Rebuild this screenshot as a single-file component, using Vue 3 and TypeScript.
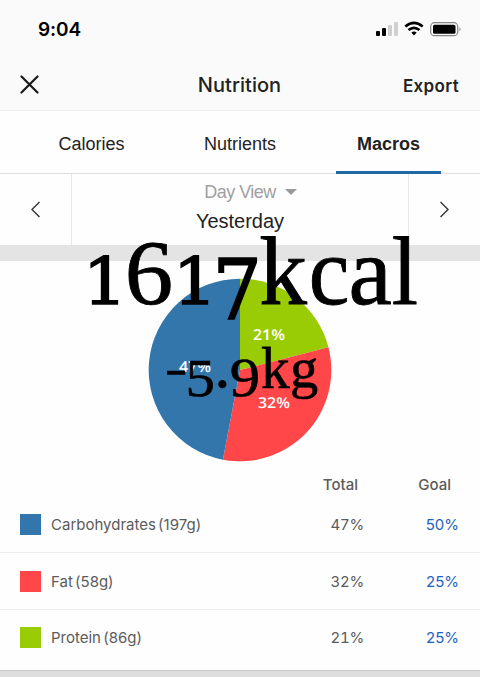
<script setup lang="ts">
interface Macro { name: string; grams: number; total: number; goal: number; color: string }
interface Glyph { ch: string; box: [number, number, number, number]; ink: [number, number, number, number]; slab?: boolean }

const tabs = ['Calories', 'Nutrients', 'Macros']
const active = 'Macros'
const macros: Macro[] = [
  { name: 'Carbohydrates', grams: 197, total: 47, goal: 50, color: '#3276ab' },
  { name: 'Fat', grams: 58, total: 32, goal: 25, color: '#ff4649' },
  { name: 'Protein', grams: 86, total: 21, goal: 25, color: '#9acc05' },
]

// Glyph ink extents (x0, x1, bottom, top) in 1/1000 em, fitted to a box on the page (x0, x1, top, bottom).
const caption: Glyph[] = [
  { ch: '1', box: [92, 121, 256, 303.5], ink: [134, 544, 0, 729], slab: true },
  { ch: '6', box: [128, 170, 241, 305.5], ink: [34, 468, -14, 684] },
  { ch: '1', box: [182, 211, 256, 303.5], ink: [134, 544, 0, 729], slab: true },
  { ch: '7', box: [217, 258, 258, 319], ink: [57, 585, 0, 729], slab: true },
  { ch: 'k', box: [260, 307.5, 237, 303.5], ink: [7, 505, 0, 683] },
  { ch: 'c', box: [311, 346.5, 259, 305], ink: [25, 412, -10, 460] },
  { ch: 'a', box: [352, 391.5, 259, 305], ink: [37, 442, -10, 460] },
  { ch: 'l', box: [393.5, 416, 237, 303.5], ink: [19, 257, 0, 683] },
]
const change: Glyph[] = [
  { ch: '-', box: [167.5, 184, 372, 375], ink: [39, 285, 194, 257] },
  { ch: '5', box: [187.5, 211.5, 359.5, 397], ink: [32, 438, -14, 688] },
  { ch: '.', box: [219, 226, 381, 388], ink: [70, 181, -11, 100] },
  { ch: '9', box: [231.5, 257.5, 358.5, 397], ink: [30, 459, -22, 676] },
  { ch: 'k', box: [261.5, 290, 347.5, 388], ink: [7, 505, 0, 683] },
  { ch: 'g', box: [291.5, 316.5, 361.5, 399.5], ink: [28, 470, -218, 460] },
]
function place(g: Glyph): string {
  const [x0, x1, top, bottom] = g.box
  const [i0, i1, low, high] = g.ink
  const sx = (x1 - x0) / ((i1 - i0) / 10)
  const sy = (bottom - top) / ((high - low) / 10)
  return `translate(${x0 - (i0 / 10) * sx} ${bottom + (low / 10) * sy}) scale(${sx} ${sy})`
}

const R = 91.3
function point(share: number): string {
  const a = share * Math.PI * 2
  return `${92 + R * Math.sin(a)} ${92 - R * Math.cos(a)}`
}
function slice(from: number, to: number): string {
  return `M92 92L${point(from)}A${R} ${R} 0 0 1 ${point(to)}Z`
}
const slices = [
  { d: slice(0, 0.21), color: '#9acc05' },
  { d: slice(0.21, 0.53), color: '#ff4649' },
  { d: slice(0.53, 1), color: '#3276ab' },
]
</script>

<template>
  <main class="screen">
    <header class="top">
      <div class="status">
        <span class="time">9:04</span>
        <svg class="status-icons" width="88" height="18" viewBox="0 0 88 18">
          <rect x="1" y="11" width="4" height="5" rx="1" />
          <rect x="7" y="8" width="4" height="8" rx="1" />
          <g fill="#d0d0d0"><rect x="13" y="5" width="4" height="11" rx="1" /><rect x="19" y="2" width="4" height="14" rx="1" /></g>
          <g fill="none" stroke="#000" stroke-width="2.6">
            <path d="M30.3 6.6Q39 -.9 47.7 6.6" /><path d="M33.5 10.1Q39 5.5 44.5 10.1" />
          </g>
          <path d="M36.3 12.6Q39 10.4 41.7 12.6L39 15.6Z" />
          <rect x="55.7" y="2.7" width="27" height="13" rx="3.8" fill="none" stroke="#858585" stroke-width="1.2" />
          <rect x="58" y="4.8" width="22.5" height="9" rx="1.6" />
          <path d="M84.5 7q2 2.2 0 4.4z" fill="#777" />
        </svg>
      </div>
      <div class="nav">
        <svg class="close" width="19" height="19" viewBox="0 0 19 19"><path d="M1.5 1.5L17.5 17.5M17.5 1.5L1.5 17.5" /></svg>
        <h1>Nutrition</h1>
        <span class="export">Export</span>
      </div>
    </header>

    <nav class="tabs">
      <span v-for="t in tabs" :key="t" class="tab" :class="{ active: t === active }">{{ t }}</span>
    </nav>

    <section class="dates">
      <div class="arrow"><svg width="10" height="17" viewBox="0 0 10 17"><path d="M8.5 1L1 8.5L8.5 16" /></svg></div>
      <div class="period">
        <div class="view">Day View <i class="caret"></i></div>
        <div class="day">Yesterday</div>
      </div>
      <div class="arrow"><svg width="10" height="17" viewBox="0 0 10 17"><path d="M.5 1L8 8.500L.5 16" /></svg></div>
    </section>

    <div class="band"></div>

    <section class="chart">
      <svg width="184" height="184" viewBox="0 0 184 184">
        <path v-for="s in slices" :key="s.color" :d="s.d" :fill="s.color" />
        <g class="share">
          <text x="105" y="62" textLength="32" lengthAdjust="spacingAndGlyphs">21%</text>
          <text x="110" y="129.5" textLength="32" lengthAdjust="spacingAndGlyphs">32%</text>
          <text x="31" y="94" textLength="32" lengthAdjust="spacingAndGlyphs">47%</text>
        </g>
      </svg>
    </section>

    <section class="table">
      <div class="row head"><span class="name"></span><span class="total">Total</span><span class="goal">Goal</span></div>
      <div v-for="m in macros" :key="m.name" class="row">
        <i class="swatch" :style="{ background: m.color }"></i>
        <span class="name">{{ m.name }} ({{ m.grams }}g)</span>
        <span class="total">{{ m.total }}%</span>
        <span class="goal">{{ m.goal }}%</span>
      </div>
    </section>
    <div class="foot"></div>

    <svg class="overlay" width="480" height="677" viewBox="0 0 480 677">
      <g class="caption">
        <text v-for="(g, i) in caption" :key="i" :class="{ slab: g.slab }" :transform="place(g)">{{ g.ch }}</text>
      </g>
      <g class="change">
        <text v-for="(g, i) in change" :key="i" :transform="place(g)">{{ g.ch }}</text>
      </g>
    </svg>
  </main>
</template>

<style>
body { margin: 0; background: #fdfdfd; }
</style>

<style scoped>
.screen { position: relative; width: 480px; height: 677px; overflow: hidden; display: flex; flex-direction: column; background: #fefefe; font-family: Inter, "Liberation Sans", sans-serif; color: #222; }
.top { box-sizing: border-box; height: 111px; background: #fafafa; border-bottom: 1px solid #f0f0f0; flex: none; }
.status { display: flex; justify-content: space-between; align-items: center; height: 58px; padding: 0 17px 0 38px; }
.time { font-size: 19px; font-weight: 600; color: #000; letter-spacing: -.1px; }
.nav { display: grid; grid-template-columns: 1fr auto 1fr; align-items: center; height: 53px; padding: 0 21px 0 20px; }
.close path { fill: none; stroke: #181818; stroke-width: 2.2; stroke-linecap: round; }
h1 { margin: 0; font-size: 20px; font-weight: 500; letter-spacing: .05px; }
.export { justify-self: end; font-size: 17px; font-weight: 600; letter-spacing: .35px; padding-top: 2px; }
.tabs { box-sizing: border-box; height: 63px; flex: none; display: flex; justify-content: center; gap: 43.5px; border-bottom: 1px solid #ddd; font-family: "Liberation Sans", sans-serif; font-size: 18px; }
.tab { box-sizing: border-box; width: 105px; height: 63px; line-height: 66px; text-align: center; }
.tab.active { font-weight: 700; border-bottom: 3px solid #1e69a5; }
.dates { height: 71px; flex: none; display: flex; font-family: "Liberation Sans", sans-serif; }
.arrow { width: 71px; display: flex; align-items: center; justify-content: center; }
.arrow path { fill: none; stroke: #333; stroke-width: 1.4; }
.period { box-sizing: border-box; flex: 1; border-left: 1px solid #e8e8e8; border-right: 1px solid #e8e8e8; text-align: center; padding-top: 6px; }
.view { display: flex; justify-content: center; align-items: center; gap: 9px; height: 24px; padding-left: 21px; font-size: 18px; letter-spacing: -.5px; color: #a0a0a0; }
.caret { border: 6.5px solid transparent; border-top-color: #999; border-bottom: 0; }
.day { font-size: 20px; line-height: 35px; }
.band { height: 16px; flex: none; background: #e4e4e4; }
.chart { height: 206px; flex: none; display: flex; justify-content: center; align-items: flex-start; }
.chart svg { margin-top: 16.5px; }
.share { fill: #fff; font-family: "Open Sans", sans-serif; font-weight: 600; font-size: 15px; text-rendering: geometricPrecision; }
.table { flex: none; font-size: 15px; color: #5b5b5b; padding-bottom: 4px; }
.row { box-sizing: border-box; display: flex; align-items: center; height: 56.4px; padding: 0 21px 0 20px; border-bottom: 1px solid #ececec; }
.row:last-child { border-bottom: 0; }
.row.head { height: 30px; padding-right: 29px; padding-top: 4px; border: 0; font-weight: 500; }
.swatch { width: 21px; height: 21px; margin-right: 10px; }
.name { flex: 1; word-spacing: -2px; }
.total { width: 34px; text-align: right; white-space: nowrap; font-variant-numeric: tabular-nums; letter-spacing: -.2px; }
.goal { width: 95px; text-align: right; color: #1e62bd; }
.head .goal { color: #5b5b5b; width: 93px; }
.head .total { width: auto; letter-spacing: 0; }
.foot { flex: 1; background: #dedede; border-top: 1px solid #ccc; }
.overlay { position: absolute; inset: 0; pointer-events: none; }
.overlay text { font-family: "Liberation Serif", serif; font-size: 100px; stroke: #000; text-rendering: geometricPrecision; }
.caption text { stroke-width: .9px; }
.change text { stroke-width: 1px; }
.overlay .caption .slab { font-family: "DejaVu Serif", serif; stroke-width: 2px; }
</style>
